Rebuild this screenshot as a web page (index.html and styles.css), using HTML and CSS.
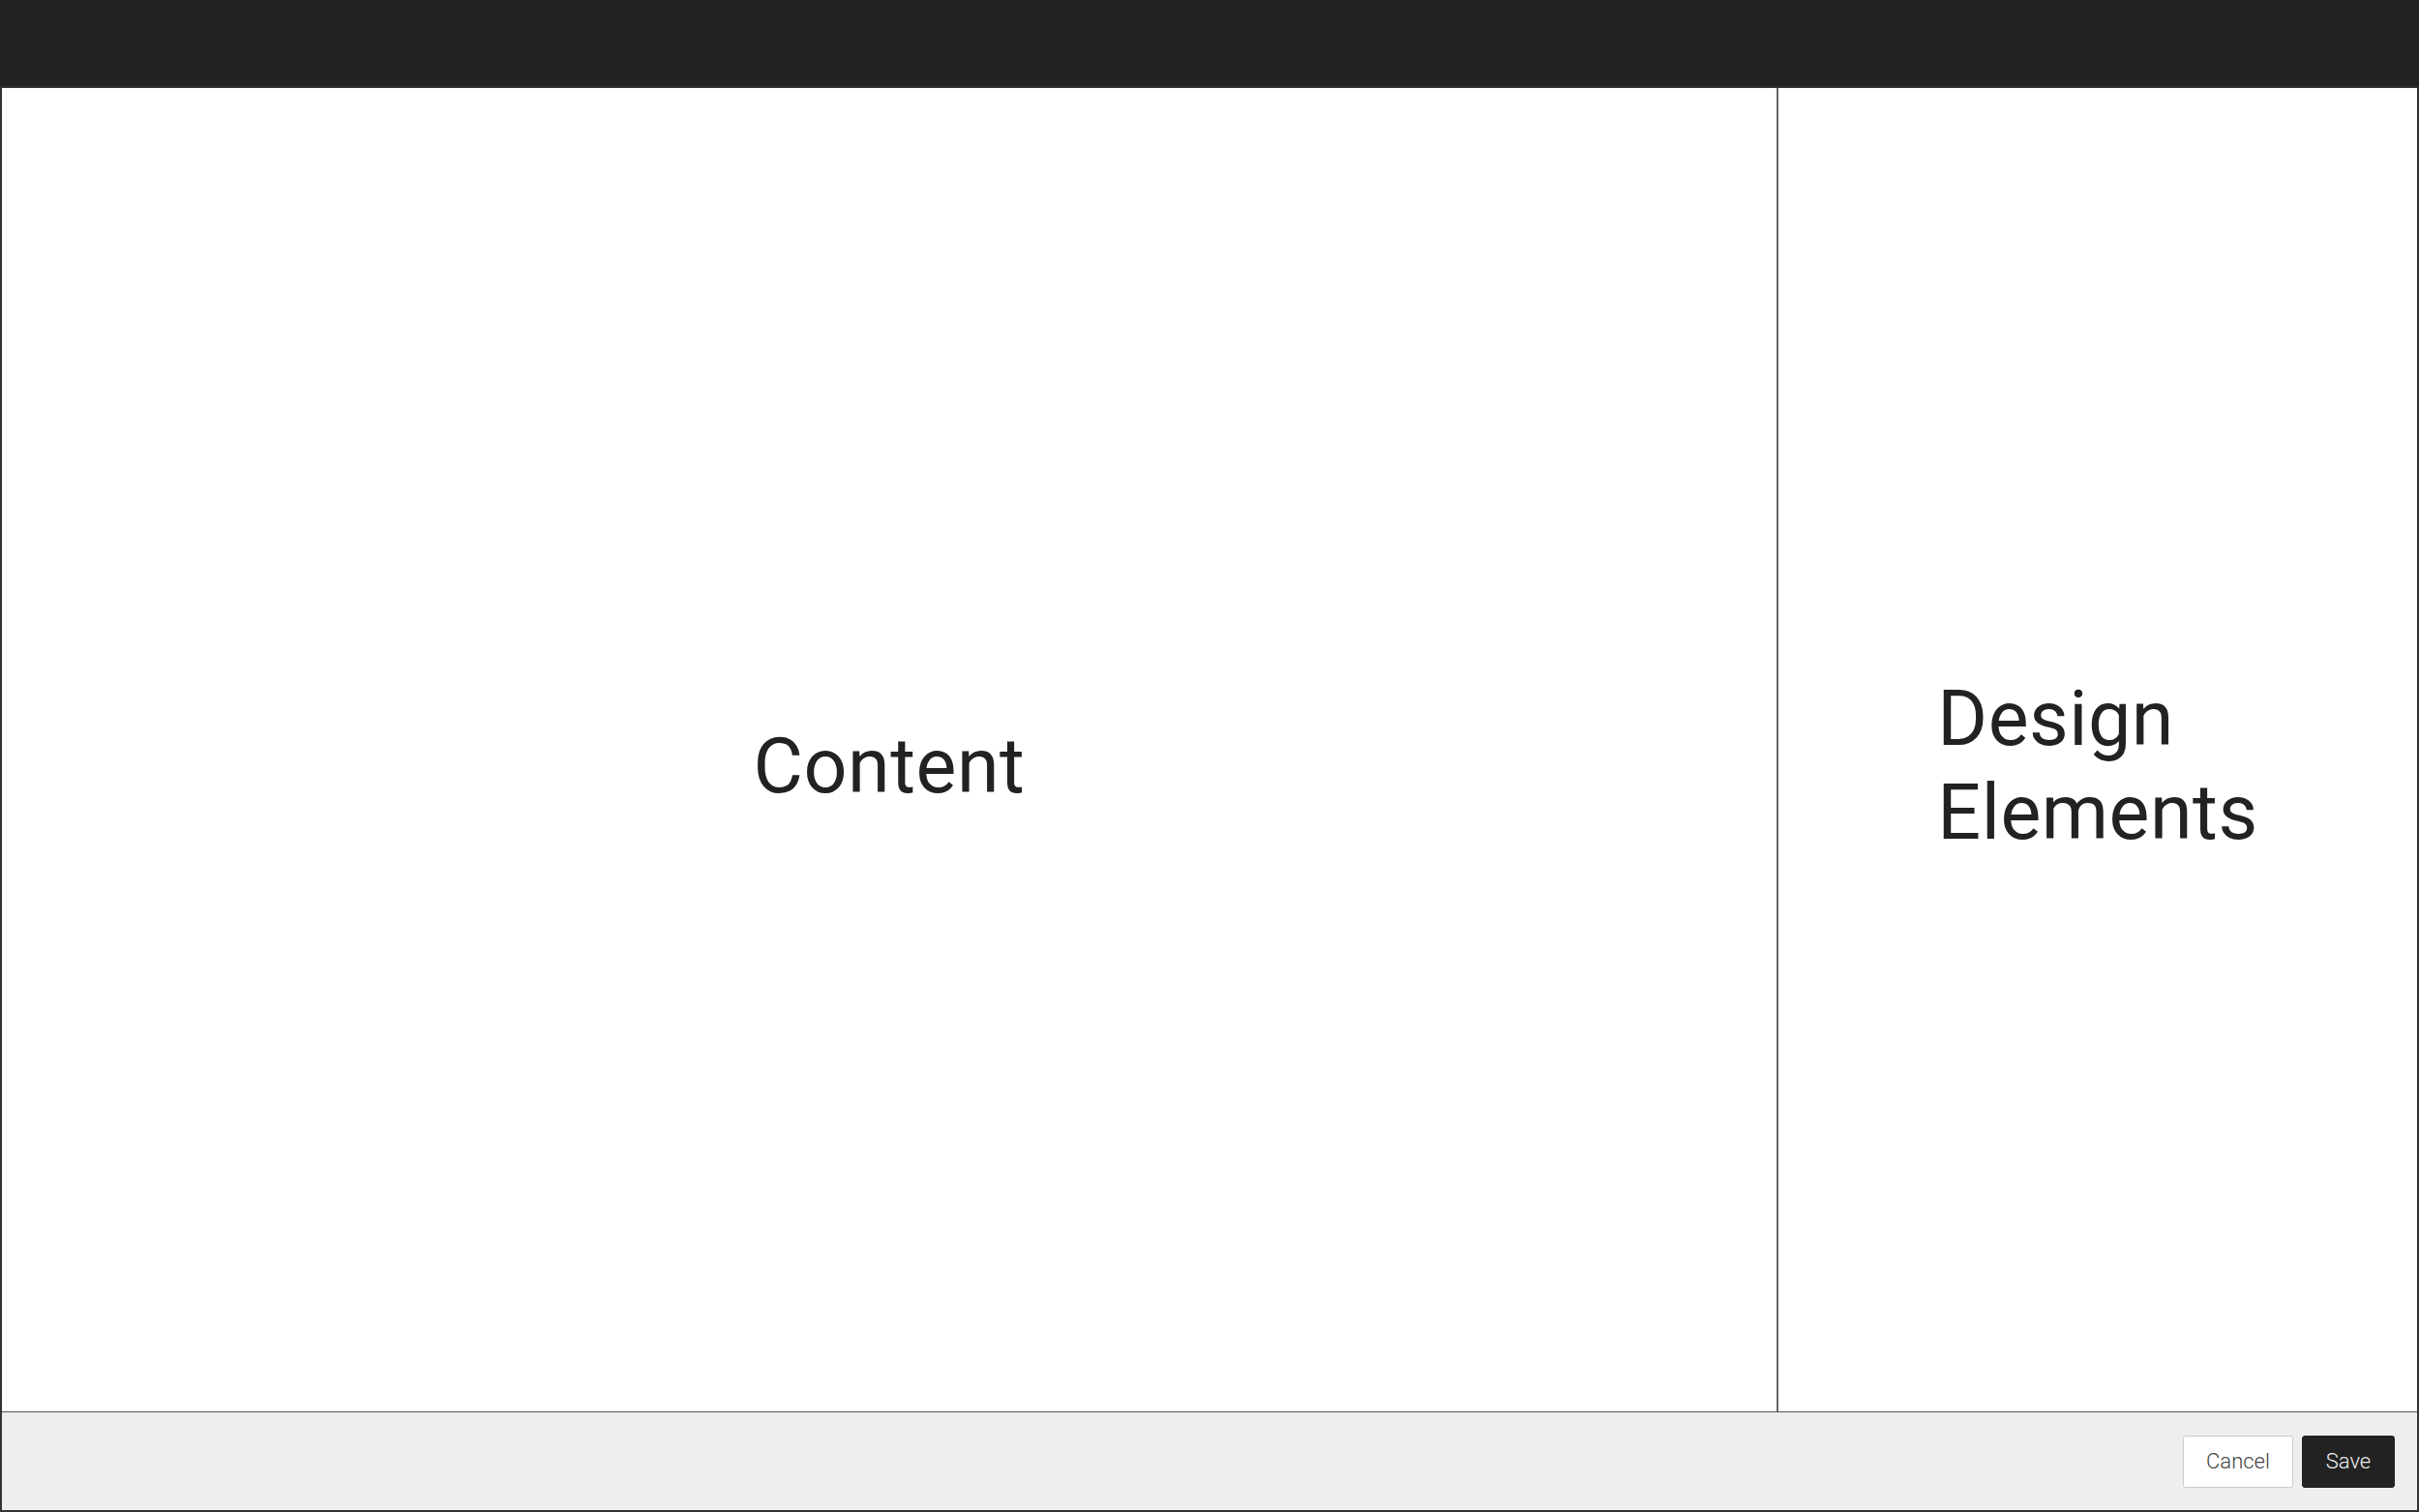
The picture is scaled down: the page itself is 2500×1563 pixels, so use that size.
FILE: index.html
```html
<!DOCTYPE html>
<html>
<head>
  <meta charset="UTF-8">
  <title>Editor</title>
  <link rel="stylesheet" href="styles.css">
</head>
<body>

  <div class="page">
    <div class="topbar"></div>
    <div class="frame">
      <div class="main">
        <div class="content"><span class="label">Content</span></div>
        <div class="design"><span class="label narrow">Design Elements</span></div>
      </div>
      <div class="footer">
        <button type="button" class="btn cancel">Cancel</button>
        <button type="button" class="btn save">Save</button>
      </div>
    </div>
  </div>

</body>
</html>
```

FILE: styles.css
```css
html, body { margin:0; padding:0; height:100%; }
body { font-family:Roboto, "Liberation Sans", sans-serif; color:#222; background:#fff; }

.page { display:flex; flex-direction:column; height:100vh; }
.topbar { height:89px; background:#222; flex:none; }

.frame { flex:1; display:flex; flex-direction:column; border:2px solid #333; min-height:0; }
.main { flex:1; display:flex; min-height:0; }
.content { flex:1; display:flex; align-items:center; justify-content:center; }
.design { width:662px; box-sizing:border-box; border-left:2px solid #666; display:flex; align-items:center; justify-content:center; }

.label { font-size:79px; line-height:97px; font-weight:400; letter-spacing:0.5px; margin-top:34px; }
.narrow { width:min-content; }

.footer { height:101px; flex:none; border-top:1px solid #555; background:#eee; display:flex; align-items:center; justify-content:flex-end; gap:9px; padding-right:23px; }
.btn { height:54px; font-family:Roboto, "Liberation Sans", sans-serif; font-size:22px; font-weight:300; border-radius:3px; cursor:pointer; }
.cancel { width:114px; background:#fff; color:#444; border:1px solid #ccc; }
.save { width:96px; background:#222; color:#eee; border:1px solid #222; }
```
